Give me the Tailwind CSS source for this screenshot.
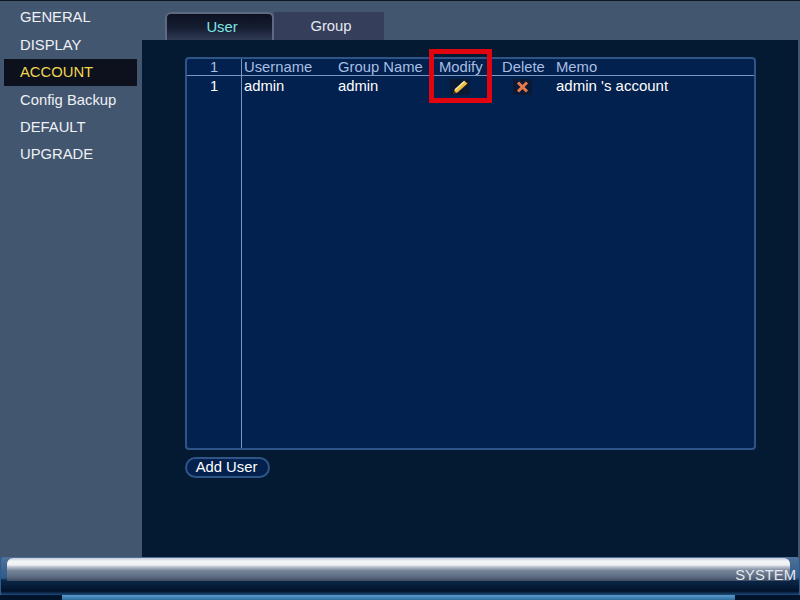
<html lang="en">
<head>
    <meta charset="UTF-8">
    <title>Account</title>
    <script src="https://cdn.jsdelivr.net/npm/@tailwindcss/browser@4"></script>
</head>
<body class="bg-[#43566f] overflow-hidden font-['Liberation_Sans',Arial,sans-serif] text-[14.8px] leading-none">
    <div class="w-[800px] h-[600px] flex flex-col border-t border-[#10151f]">
        <div class="flex h-[556px]">
            <!-- Side menu -->
            <div class="w-[142px] pt-[3px] pl-[4px] text-[#eef1f5]">
                <div class="h-[27.4px] w-[133px] pl-[16px] pb-[1px] flex items-center">GENERAL</div>
                <div class="h-[27.4px] w-[133px] pl-[16px] flex items-center">DISPLAY</div>
                <div class="h-[27.4px] w-[133px] pl-[16px] pb-[1px] flex items-center bg-[#0c111d] text-[#f2d64f]">ACCOUNT</div>
                <div class="h-[27.4px] w-[133px] pl-[16px] pt-[1px] flex items-center">Config Backup</div>
                <div class="h-[27.4px] w-[133px] pl-[16px] flex items-center">DEFAULT</div>
                <div class="h-[27.4px] w-[133px] pl-[16px] pb-[1px] flex items-center">UPGRADE</div>
            </div>

            <div class="flex-1 flex flex-col relative">
                <!-- Tabs -->
                <div class="h-[39px] pt-[11px] pl-[23px] flex">
                    <div class="w-[109px] pl-[5px] flex items-center justify-center border-2 border-b-0 border-[#5d6a80] rounded-t-md bg-gradient-to-b from-[#0c1222] via-[#141c30] to-[#2f3a54] text-[#7ee8e6]">User</div>
                    <div class="w-[110px] pl-[4px] flex items-center justify-center bg-[#353f5c] text-[#e6e9ef]">Group</div>
                </div>

                <!-- Panel -->
                <div class="flex-1 bg-[#041a33] border-r-2 border-[#43566f] pt-[17px] pl-[43px]">
                    <div class="w-[571px] h-[393px] flex bg-[#02214f] border-2 border-[#2f5488] rounded-[4px] text-white">
                        <div class="w-[55px] border-r border-[#7d96c0] flex flex-col shrink-0">
                            <div class="h-[17px] border-b border-[#7d96c0] flex items-center justify-center text-[#a9bfe2]">1</div>
                            <div class="h-[20px] flex items-center justify-center">1</div>
                        </div>
                        <div class="flex-1 flex flex-col">
                            <div class="h-[17px] border-b border-[#7d96c0] grid grid-cols-[94px_101px_63px_54px_1fr] items-center text-[#a9bfe2]">
                                <div class="pl-[2px]">Username</div>
                                <div class="pl-[2px]">Group Name</div>
                                <div class="pl-[2px]">Modify</div>
                                <div class="pl-[2px]">Delete</div>
                                <div class="pl-[2px]">Memo</div>
                            </div>
                            <div class="h-[20px] grid grid-cols-[94px_101px_63px_54px_1fr] items-center">
                                <div class="pl-[2px]">admin</div>
                                <div class="pl-[2px]">admin</div>
                                <div class="pl-[13px] pt-[1px]">
                                    <div class="w-[20px] h-[16px] bg-[#0a1a35] flex items-center justify-center">
                                        <svg width="15" height="14" viewBox="0 0 15 14">
                                            <path d="M0.5 13.5 L1.5 10 L11.5 1 L14.5 3.5 L4.5 12.5 Z" fill="#f0bd3c"/>
                                            <path d="M2 9.7 L11.5 1.2" stroke="#fff3b8" stroke-width="1.2"/>
                                            <path d="M0.5 13.5 L1.2 11 L3 12.7 Z" fill="#2b2415"/>
                                        </svg>
                                    </div>
                                </div>
                                <div class="pl-[13px] pt-[1px]">
                                    <div class="w-[19px] h-[16px] bg-[#0a1a35] flex items-center justify-center">
                                        <svg width="13" height="12" viewBox="0 0 13 12">
                                            <path d="M2 1.5 L11 10.5 M11 1.5 L2 10.5" stroke="#e8794a" stroke-width="3"/>
                                        </svg>
                                    </div>
                                </div>
                                <div class="pl-[2px] pb-[1px] text-[15px]">admin 's account</div>
                            </div>
                        </div>
                    </div>
                    <button class="mt-[7px] w-[85px] h-[21px] pr-[2px] flex items-center justify-center bg-[#04214d] border-2 border-[#2f5488] rounded-full text-white">Add User</button>
                </div>

                <!-- Red highlight round the Modify column -->
                <div class="absolute left-[287px] top-[48px] w-[63px] h-[54px] border-[5px] border-[#e0050f]"></div>
            </div>
        </div>

        <!-- Bottom bar -->
        <div class="h-[38px] pl-[6px] pr-[9px] pt-[1px] border-x border-[#2a5c90] rounded-[3px] bg-[linear-gradient(to_bottom,#4f7299_0%,#2f5a88_55%,#0a2747_62%,#02132c_90%,#1d4c7c_100%)]">
            <div class="h-[23px] flex justify-end items-end rounded-t-md text-[#e4e8ee] bg-[linear-gradient(to_bottom,#c4ccd8_0%,#f3f5f8_14%,#eef0f4_30%,#aab3c2_42%,#76849a_55%,#5f6d84_80%,#3f4d64_100%)]">
                <span class="-mr-[6px] translate-y-[2px]">SYSTEM</span>
            </div>
        </div>
        <div class="flex-1 bg-[#02132c] pl-[62px] pr-[65px]">
            <div class="h-full bg-gradient-to-b from-[#5a9ccb] to-[#2f6c9f]"></div>
        </div>
    </div>
</body>
</html>
